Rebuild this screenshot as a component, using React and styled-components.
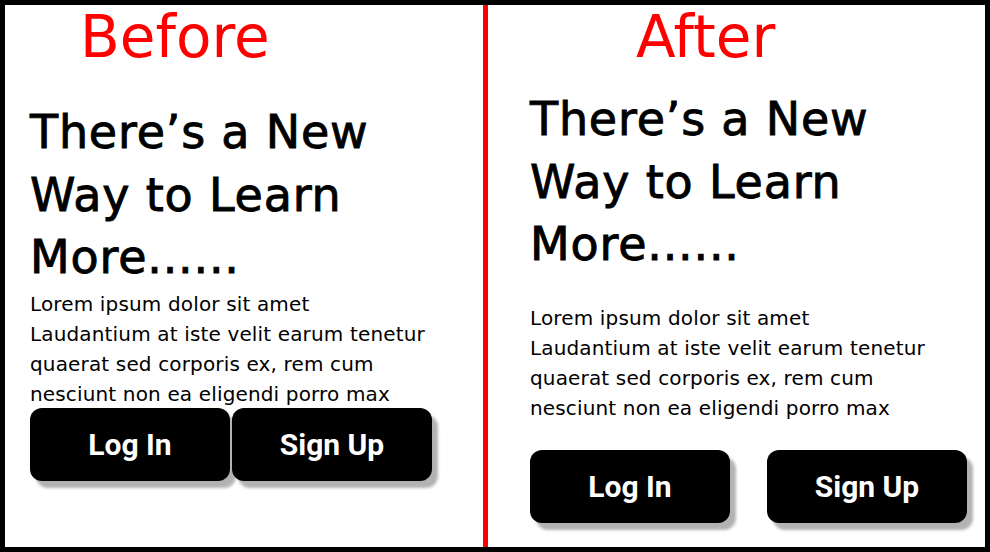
import React from 'react';
import styled, { createGlobalStyle } from 'styled-components';

const GlobalStyle = createGlobalStyle`
	html, body { margin: 0; padding: 0; background: #ffffff; }
	* { box-sizing: border-box; }
`;

const Frame = styled.div`
	width: 990px;
	height: 552px;
	border: 5px solid #000000;
	display: grid;
	grid-template-columns: 478px 5px 1fr;
	background: #ffffff;
	font-family: "DejaVu Sans", "Noto Sans", sans-serif;
	color: #000000;
`;

const Divider = styled.div`
	background: #ff0000;
`;

const Panel = styled.section`
	display: flex;
	flex-direction: column;
	padding-left: ${p => p.$pad}px;
`;

const Label = styled.h2`
	margin: 0 0 0 ${p => p.$indent}px;
	font-weight: 400;
	font-size: 58px;
	line-height: 64px;
	color: #ff0000;
`;

const Heading = styled.h1`
	margin: ${p => p.$top}px 0 0;
	font-weight: 400;
	font-size: 46px;
	line-height: 62.5px;
	letter-spacing: 0.8px;
	-webkit-text-stroke: 0.9px #000;
`;

const Text = styled.p`
	margin: ${p => p.$top}px 0 0;
	font-size: 20px;
	font-weight: 400;
	line-height: 30px;
	letter-spacing: 0.15px;
`;

const Actions = styled.div`
	display: flex;
	gap: ${p => p.$gap}px;
	margin-top: ${p => p.$top}px;
`;

const Button = styled.button`
	width: 200px;
	height: 73px;
	border: none;
	border-radius: 12px;
	background: #000000;
	color: #ffffff;
	font-family: Roboto, "Liberation Sans", sans-serif;
	font-weight: 700;
	font-size: 30px;
	box-shadow: 6px 7px 3px rgba(0, 0, 0, 0.3);
	cursor: pointer;
`;

function Hero({ label, labelIndent, pad, headTop, textTop, btnTop, gap }) {
	return (
		<Panel $pad={pad}>
			<Label $indent={labelIndent}>{label}</Label>
			<Heading $top={headTop}>
				There’s a New<br />Way to Learn<br />More......
			</Heading>
			<Text $top={textTop}>
				Lorem ipsum dolor sit amet<br />
				Laudantium at iste velit earum tenetur<br />
				quaerat sed corporis ex, rem cum<br />
				nesciunt non ea eligendi porro max
			</Text>
			<Actions $gap={gap} $top={btnTop}>
				<Button>Log In</Button>
				<Button>Sign Up</Button>
			</Actions>
		</Panel>
	);
}

export default function App() {
	return (
		<>
			<GlobalStyle />
			<Frame>
				<Hero label="Before" labelIndent={50} pad={25} headTop={32} textTop={0} btnTop={-1} gap={2} />
				<Divider />
				<Hero label="After" labelIndent={106} pad={42} headTop={19} textTop={27} btnTop={27} gap={37} />
			</Frame>
		</>
	);
}
